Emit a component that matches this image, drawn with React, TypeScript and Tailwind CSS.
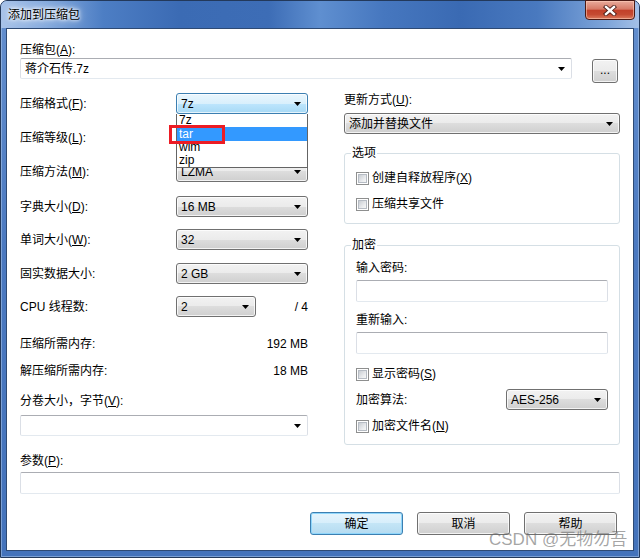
import clsx from "clsx";
import type { ReactNode } from "react";

const NORMAL =
  "border-[#707070] bg-[linear-gradient(#f2f2f2,#ebebeb_50%,#dddddd_50%,#cfcfcf)] shadow-[inset_0_0_0_1px_rgba(255,255,255,0.75)]";
const HOT =
  "border-[#3c7fb1] bg-[linear-gradient(#eaf6fd,#d9f0fc_50%,#bee6fd_50%,#a7d9f5)] shadow-[inset_0_0_0_1px_rgba(255,255,255,0.7)]";
const FIELD = "rounded-[2px] border border-[#abadb3] border-x-[#dbdfe6] border-b-[#e3e9ef] bg-white";

function Arrow() {
  return (
    <svg width="7" height="4" viewBox="0 0 7 4" className="shrink-0">
      <path d="M0 0H7L3.5 4Z" fill="#000" />
    </svg>
  );
}

// underlined accelerator key, e.g. (A)
function Acc({ k }: { k: string }) {
  return (
    <>
      (<span className="underline underline-offset-[1px]">{k}</span>)
    </>
  );
}

function Combo({ value, className, hot }: { value: string; className?: string; hot?: boolean }) {
  return (
    <div
      className={clsx(
        "flex h-[21px] shrink-0 items-center justify-between rounded-[3px] border pl-[4px] pr-[6px] text-black",
        hot ? HOT : NORMAL,
        className
      )}
    >
      <span>{value}</span>
      <Arrow />
    </div>
  );
}

function EditCombo({ value, className }: { value: string; className?: string }) {
  return (
    <div className={clsx("flex h-[21px] items-center justify-between pl-[4px] pr-[6px]", FIELD, className)}>
      <span>{value}</span>
      <Arrow />
    </div>
  );
}

function Button({ children, def, className }: { children: ReactNode; def?: boolean; className?: string }) {
  return (
    <div
      className={clsx(
        "flex h-[23px] items-center justify-center rounded-[3px] border text-black",
        def
          ? "border-[#3c7fb1] bg-[linear-gradient(#e5f4fc,#d6eefb_50%,#c4e5f6_50%,#b5dbf1)] shadow-[inset_0_0_0_1px_#8fd6fb]"
          : NORMAL,
        className
      )}
    >
      {children}
    </div>
  );
}

function Check({ children, className }: { children: ReactNode; className?: string }) {
  return (
    <div className={clsx("flex h-[14px] items-center gap-[3px]", className)}>
      <span className="flex h-[13px] w-[13px] shrink-0 items-center justify-center border border-[#8e8f8f] bg-white">
        <span className="h-[9px] w-[9px] border border-[#b6bcc4] bg-[linear-gradient(135deg,#c9cdd3,#eceef0_70%,#f6f6f6)]" />
      </span>
      <span>{children}</span>
    </div>
  );
}

function Group({ title, className, children }: { title: string; className?: string; children: ReactNode }) {
  return (
    <div className={clsx("relative flex flex-col rounded-[3px] border border-[#d5dfe5] px-[11px]", className)}>
      <span className="absolute -top-[8px] left-[6px] bg-white px-[1px] leading-[14px]">{title}</span>
      {children}
    </div>
  );
}

function Row({ label, children, className }: { label: ReactNode; children: ReactNode; className?: string }) {
  return (
    <div className={clsx("flex h-[21px] items-center justify-between", className)}>
      <span>{label}</span>
      {children}
    </div>
  );
}

const FORMATS = ["7z", "tar", "wim", "zip"];

export default function App() {
  return (
    <div className="relative h-[558px] w-[640px] overflow-hidden bg-white font-['Liberation_Sans','Noto_Sans_CJK_SC',sans-serif] text-[12px] leading-[14px] text-black">
      <div className="flex h-full flex-col rounded-t-[7px] border border-[#23395b] bg-[linear-gradient(180deg,#6590cf,#4b79c0_45%,#4473bb)] shadow-[inset_0_0_0_1px_rgba(190,215,245,0.45)]">
        {/* title bar */}
        <div className="flex h-[27px] shrink-0 items-start rounded-t-[6px] bg-[linear-gradient(90deg,#a8c3e9_0%,#86abde_7%,#4d7ec4_16%,#3b6bb4_28%,#3d6db6_42%,#5f8fd0_50%,#4677bf_60%,#3a6ab3_72%,#4979bf_84%,#7ea5da_95%,#a4c0e7_100%)]">
          <span className="mt-[7px] pl-[7px] [text-shadow:0_0_5px_#fff,0_0_8px_#fff,0_0_3px_#fff]">添加到压缩包</span>
          <div className="ml-auto mr-[4px] -mt-[1px] flex h-[20px] w-[50px] items-center justify-center rounded-b-[4px] border border-[#4b1a14] bg-[linear-gradient(#e9ab9c,#d67a66_45%,#c2402a_52%,#c54a32_75%,#dc7a5e)] shadow-[inset_0_0_0_1px_rgba(255,210,190,0.55)]">
            <svg width="14" height="11" viewBox="0 0 14 11">
              <path d="M3 2L11 9M11 2L3 9" stroke="#4a1d18" strokeWidth="4.2" strokeLinecap="square" />
              <path d="M3 2L11 9M11 2L3 9" stroke="#fff" strokeWidth="2.4" strokeLinecap="square" />
            </svg>
          </div>
        </div>

        {/* client area */}
        <div className="mx-[5px] flex h-[523px] shrink-0 flex-col border border-[#2e4a74] bg-white pl-[13px] pr-[13px] pt-[14px]">
          <span>
            压缩包<Acc k="A" />:
          </span>
          <div className="mt-[1px] flex items-start gap-[20px]">
            <EditCombo value="蒋介石传.7z" className="flex-1" />
            <Button className="mr-[2px] mt-[1px] h-[24px] w-[26px] items-end pb-[5px] text-[#553a8a]">...</Button>
          </div>

          <div className="mt-[10px] grid grid-cols-[288px_276px] gap-x-[36px]">
            {/* left column */}
            <div className="flex flex-col">
              <Row
                label={
                  <>
                    压缩格式<Acc k="F" />:
                  </>
                }
              >
                <div className="relative">
                  <Combo value="7z" hot className="w-[132px]" />
                  <div className="absolute left-0 top-[21px] z-10 flex w-[132px] flex-col border-x border-b border-[#646464] bg-white">
                    {FORMATS.map((f) => (
                      <div
                        key={f}
                        className={clsx(
                          "flex items-center pl-[2px]",
                          f === "tar" ? "h-[14px] bg-[#3399ff] leading-[14px] text-white" : "h-[13px] leading-[13px]"
                        )}
                      >
                        {f}
                      </div>
                    ))}
                    <div className="absolute -left-[8px] top-[11px] h-[19px] w-[56px] border-[3px] border-[#ec1c24]" />
                  </div>
                </div>
              </Row>
              <Row
                className="mt-[13px]"
                label={
                  <>
                    压缩等级<Acc k="L" />:
                  </>
                }
              >
                <Combo value="" className="w-[132px]" />
              </Row>
              <Row
                className="mt-[13px]"
                label={
                  <>
                    压缩方法<Acc k="M" />:
                  </>
                }
              >
                <Combo value="LZMA" className="w-[132px]" />
              </Row>
              <Row
                className="mt-[14px]"
                label={
                  <>
                    字典大小<Acc k="D" />:
                  </>
                }
              >
                <Combo value="16 MB" className="w-[132px]" />
              </Row>
              <Row
                className="mt-[12px]"
                label={
                  <>
                    单词大小<Acc k="W" />:
                  </>
                }
              >
                <Combo value="32" className="w-[132px]" />
              </Row>
              <Row className="mt-[13px]" label="固实数据大小:">
                <Combo value="2 GB" className="w-[132px]" />
              </Row>
              <div className="mt-[12px] flex h-[21px] items-center">
                <span className="w-[156px]">CPU 线程数:</span>
                <Combo value="2" className="w-[80px]" />
                <span className="ml-auto">/ 4</span>
              </div>
              <div className="mt-[20px] flex justify-between">
                <span>压缩所需内存:</span>
                <span>192 MB</span>
              </div>
              <div className="mt-[13px] flex justify-between">
                <span>解压缩所需内存:</span>
                <span>18 MB</span>
              </div>
              <span className="mt-[16px]">
                分卷大小，字节<Acc k="V" />:
              </span>
              <EditCombo value="" className="mt-[7px] h-[20px]" />
            </div>

            {/* right column */}
            <div className="flex flex-col">
              <span>
                更新方式<Acc k="U" />:
              </span>
              <Combo value="添加并替换文件" className="mt-[6px] w-full" />
              <Group title="选项" className="mt-[19px] h-[71px] pt-[17px]">
                <Check>
                  创建自释放程序<Acc k="X" />
                </Check>
                <Check className="mt-[12px]">压缩共享文件</Check>
              </Group>
              <Group title="加密" className="mt-[21px] h-[200px] pt-[15px]">
                <span>输入密码:</span>
                <div className={clsx("mt-[5px] h-[22px]", FIELD)} />
                <span className="mt-[11px]">重新输入:</span>
                <div className={clsx("mt-[5px] h-[22px]", FIELD)} />
                <Check className="mt-[13px]">
                  显示密码<Acc k="S" />
                </Check>
                <Row className="mt-[8px]" label="加密算法:">
                  <Combo value="AES-256" className="w-[102px]" />
                </Row>
                <Check className="mt-[9px]">
                  加密文件名<Acc k="N" />
                </Check>
              </Group>
            </div>
          </div>

          <span className="mt-[9px]">
            参数<Acc k="P" />:
          </span>
          <div className={clsx("mt-[4px] h-[22px]", FIELD)} />

          <div className="mt-[18px] flex justify-end gap-[14px] pr-[3px]">
            <Button def className="w-[93px]">
              确定
            </Button>
            <Button className="w-[93px]">取消</Button>
            <Button className="w-[93px]">帮助</Button>
          </div>
        </div>
      </div>

      {/* watermark */}
      <span className="pointer-events-none absolute left-[489px] top-[529px] text-[17px] leading-[22px] text-[rgba(105,105,105,0.6)]">
        CSDN @无物勿吾
      </span>
    </div>
  );
}
